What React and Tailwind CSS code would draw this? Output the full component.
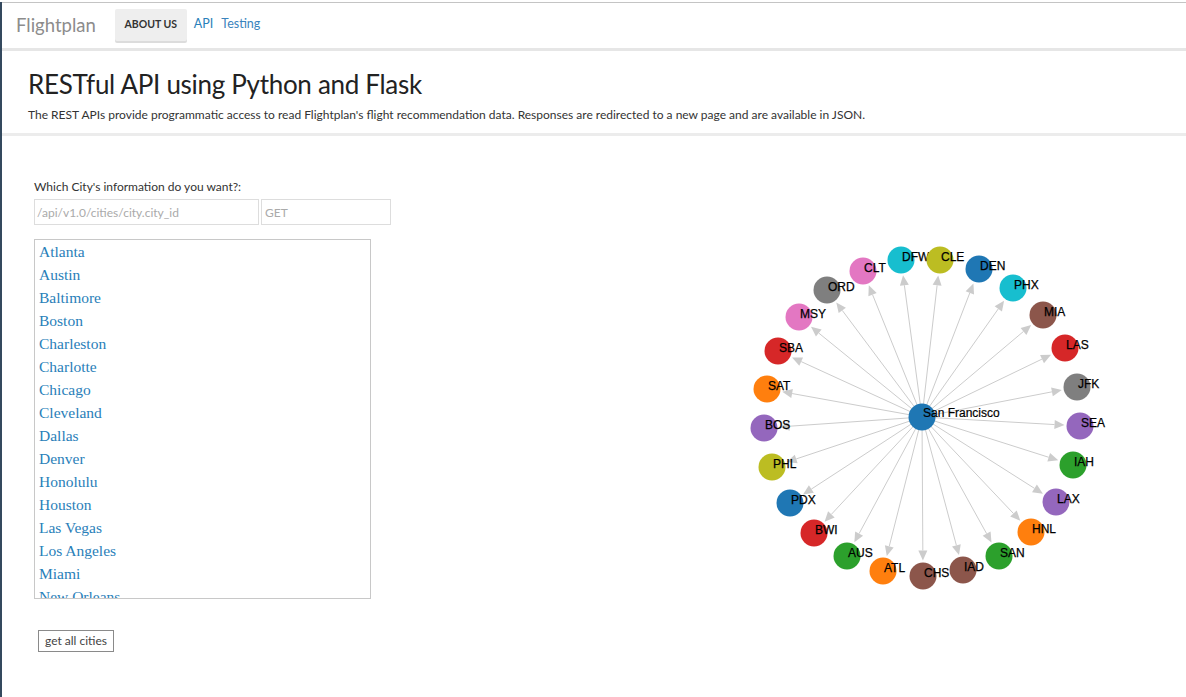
import React from 'react';

// the list box is cut off after New Orleans, like a scrolled select
const cities = [
  'Atlanta', 'Austin', 'Baltimore', 'Boston', 'Charleston', 'Charlotte', 'Chicago',
  'Cleveland', 'Dallas', 'Denver', 'Honolulu', 'Houston', 'Las Vegas', 'Los Angeles',
  'Miami', 'New Orleans',
];

// airport nodes, laid out around San Francisco (page coordinates)
const hub = { x: 922, y: 417 };
const nodes = [
  ['DFW', 901, 260, '#17becf'],
  ['CLE', 940, 260, '#bcbd22'],
  ['DEN', 979, 269, '#1f77b4'],
  ['PHX', 1013, 288, '#17becf'],
  ['MIA', 1043, 315, '#8c564b'],
  ['LAS', 1065, 348, '#d62728'],
  ['JFK', 1077, 387, '#7f7f7f'],
  ['SEA', 1080, 426, '#9467bd'],
  ['IAH', 1073, 465, '#2ca02c'],
  ['LAX', 1056, 502, '#9467bd'],
  ['HNL', 1031, 532, '#ff7f0e'],
  ['SAN', 999, 556, '#2ca02c'],
  ['IAD', 963, 570, '#8c564b'],
  ['CHS', 923, 576, '#8c564b'],
  ['ATL', 883, 571, '#ff7f0e'],
  ['AUS', 847, 556, '#2ca02c'],
  ['BWI', 814, 533, '#d62728'],
  ['PDX', 790, 503, '#1f77b4'],
  ['PHL', 772, 467, '#bcbd22'],
  ['BOS', 764, 428, '#9467bd'],
  ['SAT', 767, 389, '#ff7f0e'],
  ['SBA', 778, 351, '#d62728'],
  ['MSY', 799, 317, '#e377c2'],
  ['ORD', 827, 290, '#7f7f7f'],
  ['CLT', 863, 271, '#e377c2'],
];

const R = 13.5;

const RouteGraph = () => {
  const links = nodes.map(([id, x, y]) => {
    const dx = x - hub.x;
    const dy = y - hub.y;
    const d = Math.sqrt(dx * dx + dy * dy);
    const ux = dx / d;
    const uy = dy / d;
    const tip = d - R - 2;
    const tx = hub.x + ux * tip;
    const ty = hub.y + uy * tip;
    const bx = tx - ux * 10;
    const by = ty - uy * 10;
    const pts = `${tx},${ty} ${bx - uy * 4.5},${by + ux * 4.5} ${bx + uy * 4.5},${by - ux * 4.5}`;
    return { id, bx, by, pts };
  });

  return (
    <svg width="440" height="420" viewBox="700 200 440 420" className="block shrink-0">
      {links.map((l) => (
        <g key={l.id}>
          <line x1={hub.x} y1={hub.y} x2={l.bx} y2={l.by} stroke="#cccccc" strokeWidth="1" />
          <polygon points={l.pts} fill="#cccccc" />
        </g>
      ))}
      {nodes.map(([id, x, y, c]) => (
        <g key={id}>
          <circle cx={x} cy={y} r={R} fill={c} />
          <text x={x + 1} y={y + 1} fontSize="12" fontFamily="'Liberation Sans', Arial, sans-serif" fill="#000" stroke="#000" strokeWidth="0.25">
            {id}
          </text>
        </g>
      ))}
      <circle cx={hub.x} cy={hub.y} r={R} fill="#1f77b4" />
      <text x={hub.x + 1} y={hub.y} fontSize="12" fontFamily="'Liberation Sans', Arial, sans-serif" fill="#000" stroke="#000" strokeWidth="0.2">
        San Francisco
      </text>
    </svg>
  );
};

export default function App() {
  return (
    <div className="min-h-[697px] bg-white border-l-2 border-[#34495e] font-['Lato',sans-serif] text-[#333]">
      {/* navbar */}
      <div className="mt-[2px] border-t border-[#c4c4c4]">
        <div className="h-[45px] flex items-center pl-[14px] pb-[2px]">
          <span className="text-[18.5px] text-[#8c8c8c] mt-[2px]">Flightplan</span>
          <button className="ml-[19px] w-[72px] h-[32px] bg-[#eeeeee] rounded-[2px] shadow-[0_2px_0_#dcdcdc] text-[10.5px] font-bold text-[#333]">
            ABOUT US
          </button>
          <a className="ml-[7px] text-[12.5px] text-[#2980b9]">API</a>
          <a className="ml-[8px] text-[12.5px] text-[#3a84bd]">Testing</a>
        </div>
      </div>
      <div className="h-[3px] bg-[#e6e6e6]" />

      {/* header */}
      <div className="h-[82px] pl-[26px] pt-[16px]">
        <h1 className="text-[26px] leading-[34px] tracking-[-0.3px] text-[#222]">RESTful API using Python and Flask</h1>
        <p className="mt-[5px] text-[12px] leading-[18px] text-[#333]">
          The REST APIs provide programmatic access to read Flightplan's flight recommendation data. Responses are redirected to a new page and are available in JSON.
        </p>
      </div>
      <div className="h-[3px] bg-[#ececec]" />

      {/* content */}
      <div className="flex">
        <div className="w-[389px] pl-[32px] pt-[42px] shrink-0">
          <label className="block text-[12px] leading-[18px] text-[#333]">Which City's information do you want?:</label>
          <div className="flex gap-[2px] mt-[3px]">
            <input
              className="w-[225px] h-[26px] border border-[#dddddd] px-[2px] text-[12px] outline-none placeholder:text-[#aaaaaa]"
              placeholder="/api/v1.0/cities/city.city_id"
            />
            <input
              className="w-[130px] h-[26px] border border-[#dddddd] px-[3px] text-[12px] outline-none placeholder:text-[#aaaaaa]"
              placeholder="GET"
            />
          </div>
          <div className="mt-[14px] w-[337px] h-[360px] border border-[#c8c8c8] overflow-hidden px-[4px]">
            {cities.map((c) => (
              <div key={c} className="h-[23px] leading-[23px] text-[15.5px] text-[#2980b9] font-['Liberation_Serif',Georgia,serif]">
                {c}
              </div>
            ))}
          </div>
          <button className="mt-[31px] ml-[4px] h-[22px] px-[6px] border border-[#8a8a8a] text-[12px] text-[#444] leading-[20px]">
            get all cities
          </button>
        </div>
        <div className="ml-[309px] mt-[64px]">
          <RouteGraph />
        </div>
      </div>
    </div>
  );
}
